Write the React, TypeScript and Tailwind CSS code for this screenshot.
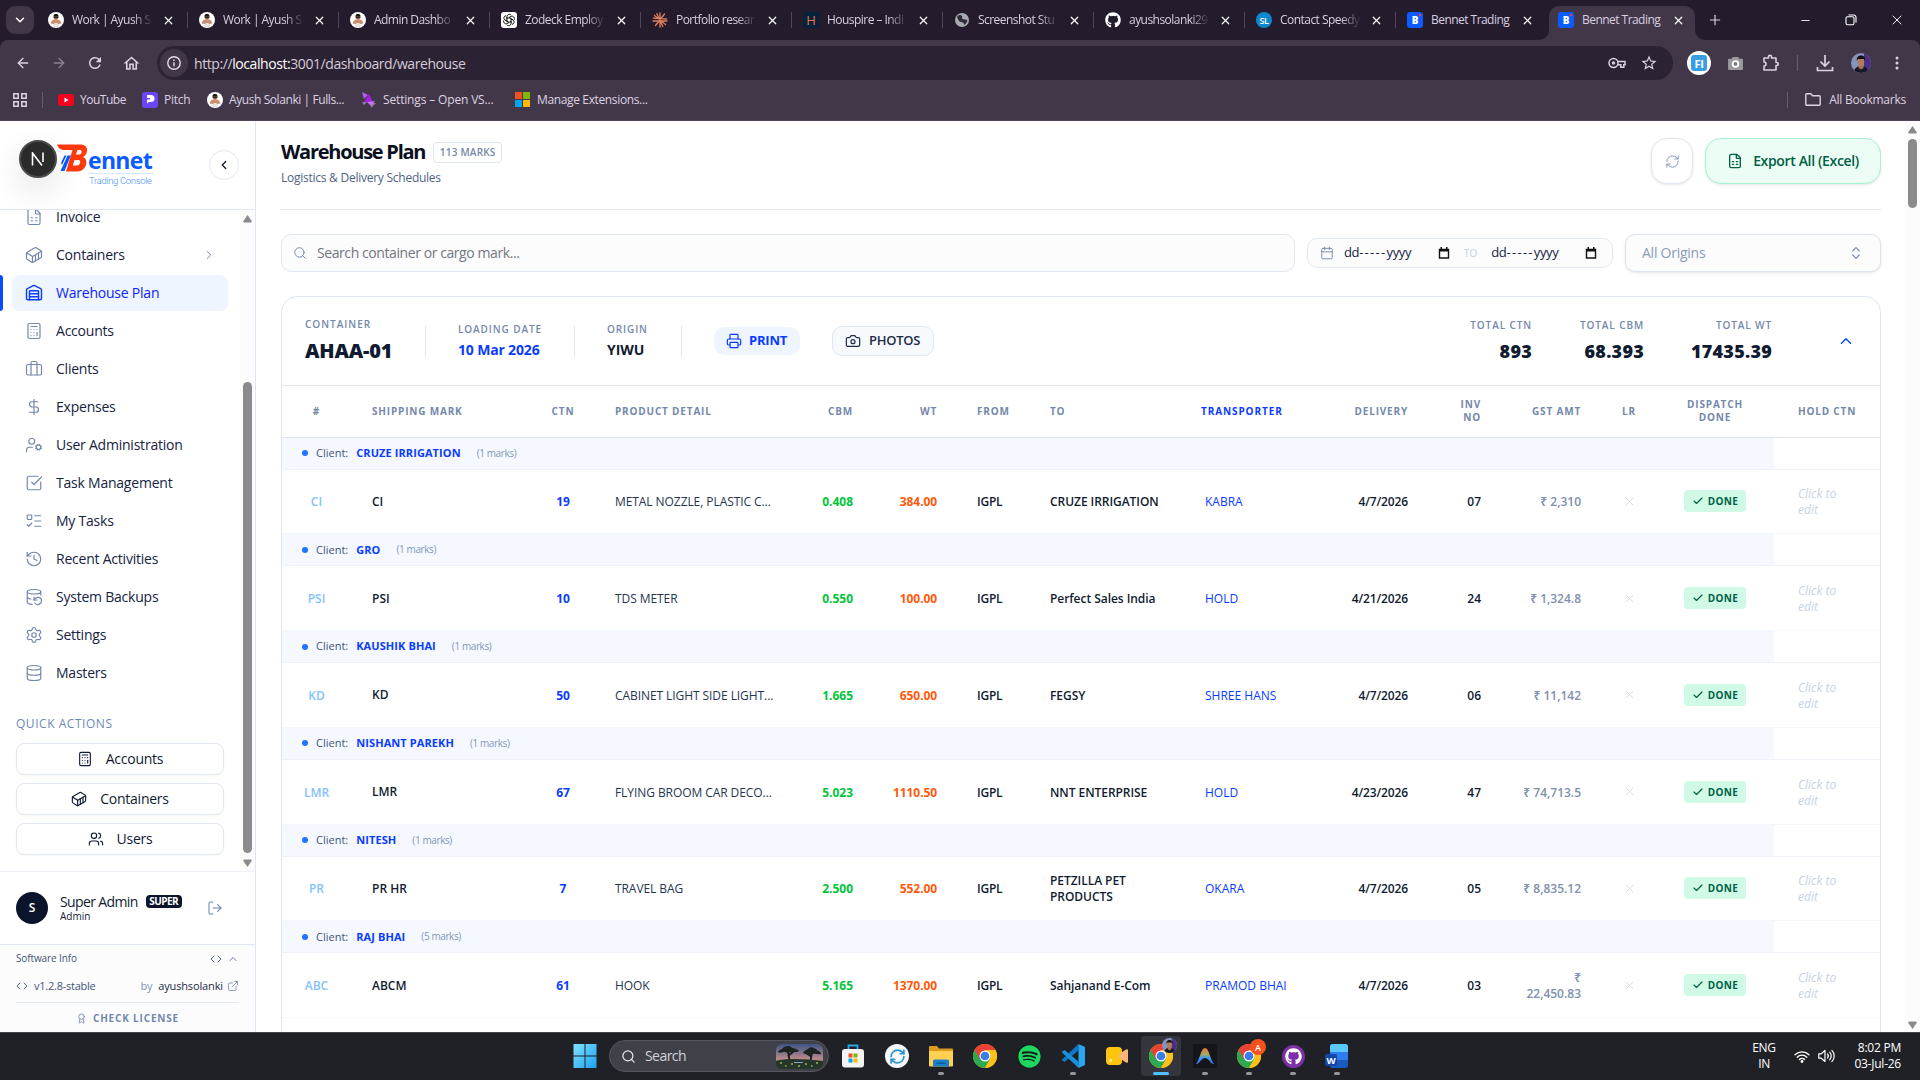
import type { ReactNode } from "react";
import {
  ArrowLeft,
  ArrowRight,
  Award,
  Briefcase,
  Calculator,
  Calendar,
  Camera,
  Check,
  ChevronDown,
  ChevronLeft,
  ChevronRight,
  ChevronsUpDown,
  ChevronUp,
  Code,
  Container,
  Database,
  DatabaseBackup,
  DollarSign,
  ExternalLink,
  FileSpreadsheet,
  History,
  ListTodo,
  LogOut,
  Minus,
  Plus,
  Printer,
  RefreshCw,
  Search,
  Settings,
  SquareCheckBig,
  UserCog,
  Users,
  Warehouse,
  X,
} from "lucide-react";
import { FaGithub, FaSpotify } from "react-icons/fa";
import { MdOutlineHome, MdOutlineStarBorder, MdRefresh } from "react-icons/md";

/* ---------- small artwork ---------- */

function Person({ size = 16 }: { size?: number }) {
  return (
    <svg width={size} height={size} viewBox="0 0 16 16" className="shrink-0">
      <circle cx="8" cy="8" r="8" fill="#fff" />
      <path d="M2.6 11.5C3 8.6 5 7.2 8 7.2s5 1.4 5.4 4.3l-3 .4-2.4-.9-2.4.9z" fill="#c98f6f" />
      <path d="M4.5 12.5l3.5-1.6 3.5 1.6L10 15H6z" fill="#e9e2df" />
      <circle cx="8" cy="5" r="2.4" fill="#8d5f4a" />
      <path d="M5.4 4.4C5.6 2.6 6.6 2 8 2s2.4.6 2.6 2.4z" fill="#1c1413" />
      <path d="M5.6 5h4.8v.9H5.6z" fill="#222" />
    </svg>
  );
}

function Avatar({ size = 20 }: { size?: number }) {
  return (
    <svg width={size} height={size} viewBox="0 0 20 20" className="shrink-0">
      <defs>
        <clipPath id="avatar-clip">
          <circle cx="10" cy="10" r="10" />
        </clipPath>
      </defs>
      <g clipPath="url(#avatar-clip)">
        <path d="M0 0h20v20H0z" fill="#8494ba" />
        <path d="M13 0h7v20h-7z" fill="#4a2f86" />
        <path d="M3 20c0-5 3-7 7-7s7 2 7 7z" fill="#171a26" />
        <path d="M7.5 12h5v3l-2.500 1.500L7.500 15z" fill="#a86f4b" />
        <ellipse cx="10" cy="8.800" rx="3.200" ry="4.400" fill="#b57b56" />
        <path d="M5.800 8C5.400 4 7.500 2.500 10 2.500S14.600 4 14.200 8l-1-2H7z" fill="#14100f" />
      </g>
    </svg>
  );
}

function ChromeLogo() {
  return (
    <svg width="24" height="24" viewBox="0 0 24 24">
      <circle cx="12" cy="12" r="12" fill="#fbc116" />
      <path d="M12 12L1.600 6A12 12 0 0 0 12 24l5.200-9z" fill="#2da94f" />
      <path d="M12 12L1.600 6A12 12 0 0 1 22.400 6H12z" fill="#e94235" />
      <path d="M1.600 6l5.200 9L12 6z" fill="#e94235" />
      <path d="M22.400 6H12l5.200 9L12 24A12 12 0 0 0 22.400 6z" fill="#fbc116" />
      <circle cx="12" cy="12" r="5.500" fill="#fff" />
      <circle cx="12" cy="12" r="4.300" fill="#3b7ded" />
    </svg>
  );
}

function BennetFavicon() {
  return (
    <span className="relative flex size-4 items-center justify-center rounded-[3px] bg-[#0a5cff] text-[10px] font-extrabold leading-none text-white">
      B
      <span className="absolute right-[2px] top-[2px] size-[2px] bg-[#ff3b2f]" />
    </span>
  );
}

function Globe() {
  return (
    <svg width="16" height="16" viewBox="0 0 16 16">
      <circle cx="8" cy="8" r="7" fill="#a7abb0" />
      <path d="M3 5c2-3 4-2 5-1s-1 2 1 3 3 0 4 1-1 4-3 5c0-2-1-3-3-3S4 7 3 5z" fill="#33293d" />
    </svg>
  );
}

function ClaudeBurst() {
  return (
    <svg width="16" height="16" viewBox="0 0 16 16" stroke="#e0805a" strokeWidth="1.300" strokeLinecap="round">
      <path d="M8 .8v14.400M1 9h14M2.500 3.500l11 9M12.500 2L3.500 13.500M4.800 1.500L10.800 14.500M1.500 6.200l13 .8" />
    </svg>
  );
}

function OpenAiMark() {
  return (
    <span className="flex size-4 items-center justify-center rounded-[3px] bg-white">
      <svg width="14" height="14" viewBox="0 0 24 24" fill="none" stroke="#111" strokeWidth="1.500">
        {[0, 60, 120, 180, 240, 300].map((deg) => (
          <path key={deg} d="M8.500 10V5.500A4.300 4.300 0 0 1 16 3.800M8.500 10l6.500-3.800" transform={`rotate(${deg} 12 12)`} />
        ))}
      </svg>
    </span>
  );
}

/* ---------- browser ---------- */

const TABS: { title: string; icon: ReactNode }[] = [
  { title: "Work | Ayush S", icon: <Person /> },
  { title: "Work | Ayush S", icon: <Person /> },
  { title: "Admin Dashbo", icon: <Person /> },
  { title: "Zodeck Employ", icon: <OpenAiMark /> },
  { title: "Portfolio resear", icon: <ClaudeBurst /> },
  {
    title: "Houspire – Indi",
    icon: (
      <span className="flex size-4 items-center justify-center bg-[#06233b] text-[13px] leading-none text-[#e8714c]">H</span>
    ),
  },
  { title: "Screenshot Stu", icon: <Globe /> },
  { title: "ayushsolanki29", icon: <FaGithub size={16} className="text-white" /> },
  {
    title: "Contact Speedy",
    icon: (
      <span className="flex size-4 items-center justify-center rounded-full bg-[#0c87d0] text-[9px] font-semibold leading-none tracking-tighter text-white">
        SL
      </span>
    ),
  },
  { title: "Bennet Trading", icon: <BennetFavicon /> },
  { title: "Bennet Trading", icon: <BennetFavicon /> },
];

function TabStrip() {
  return (
    <div className="flex h-10 bg-[#241b2d] text-[#d8cfe0]">
      <div className="ml-[6px] mr-[3px] mt-[6px] flex size-7 items-center justify-center rounded-[9px] bg-[#423749]">
        <ChevronDown size={14} strokeWidth={2.5} className="text-white" />
      </div>
      {TABS.map((tab, i) => {
        const active = i === TABS.length - 1;
        const faded = i < TABS.length - 2;
        return (
          <div key={i} className="relative flex w-[151px] items-center pl-[11px]">
            {active && (
              <>
                <div className="absolute bottom-0 left-[2px] right-[3px] top-[6px] rounded-t-[10px] bg-[#423749]" />
                <svg className="absolute bottom-0 left-[-8px]" width="10" height="10" viewBox="0 0 10 10">
                  <path d="M10 0v10H0A10 10 0 0 0 10 0z" fill="#423749" />
                </svg>
                <svg className="absolute bottom-0 right-[-7px]" width="10" height="10" viewBox="0 0 10 10">
                  <path d="M0 0v10h10A10 10 0 0 1 0 0z" fill="#423749" />
                </svg>
              </>
            )}
            <span className="relative mr-2 flex size-4">{tab.icon}</span>
            <span
              className={
                faded
                  ? "relative w-[81px] whitespace-nowrap text-[12px] tracking-[-0.045em] [mask-image:linear-gradient(to_right,black_75%,transparent)]"
                  : "relative w-[81px] whitespace-nowrap text-[12px] tracking-[-0.045em]"
              }
            >
              {tab.title}
            </span>
            <X size={13} strokeWidth={2.200} className="relative ml-[9px] text-white" />
            {faded && <span className="absolute right-0 top-3 h-4 w-px bg-[#50455a]" />}
          </div>
        );
      })}
      <div className="flex items-center pl-[9px]">
        <Plus size={16} strokeWidth={1.800} />
      </div>
      <div className="ml-auto flex items-center text-white">
        <span className="flex w-[46px] justify-center"><Minus size={13} strokeWidth={1.600} /></span>
        <span className="flex w-[46px] justify-center">
          <svg width="12" height="12" viewBox="0 0 12 12" fill="none" stroke="currentColor" strokeWidth="1.100">
            <rect x="1" y="2.800" width="8" height="8" rx="1.500" />
            <path d="M3.500 1h5A2.500 2.500 0 0 1 11 3.500v5" />
          </svg>
        </span>
        <span className="flex w-[46px] justify-center"><X size={16} strokeWidth={1.400} /></span>
      </div>
    </div>
  );
}

function Toolbar() {
  return (
    <div className="flex h-[46px] items-center rounded-t-lg bg-[#423749] text-[#ddd0e2]">
      <span className="ml-[5px] flex w-9 justify-center"><ArrowLeft size={16} /></span>
      <span className="flex w-9 justify-center text-[#8b8192]"><ArrowRight size={16} /></span>
      <span className="flex w-9 justify-center"><MdRefresh size={18} /></span>
      <span className="flex w-9 justify-center"><MdOutlineHome size={19} /></span>
      <div className="ml-[8px] flex h-[34px] w-[1516px] items-center rounded-full bg-[#2b2233] pl-[3px]">
        <span className="flex size-7 items-center justify-center rounded-full bg-[#423749]">
          <svg width="14" height="14" viewBox="0 0 14 14" fill="none" stroke="#e6dcea" strokeWidth="1.400">
            <circle cx="7" cy="7" r="6.200" />
            <path d="M7 6.200v4M7 3.500v1.400" />
          </svg>
        </span>
        <span className="ml-[6px] text-[14px] tracking-[-0.03em] text-[#d5cbd9]">
          http://<span className="text-white">localhost:</span>3001/dashboard/warehouse
        </span>
        <svg width="18" height="12" viewBox="0 0 18 12" fill="none" stroke="#ddd0e2" strokeWidth="1.500" className="ml-auto">
          <circle cx="5.500" cy="6" r="4.500" />
          <circle cx="5.500" cy="6" r="1" />
          <path d="M10 4.500h7v3.200h-1.200v2.500h-3V7.700H10" />
        </svg>
        <MdOutlineStarBorder size={18} className="ml-[14px] mr-[15px]" />
      </div>
      <span className="ml-[14px] flex size-6 items-center justify-center rounded-full bg-white">
        <span className="flex size-4 items-center justify-center rounded-[3px] bg-[#3a9ee5] text-[11px] font-bold leading-none tracking-[-0.02em] text-white">FI</span>
      </span>
      <svg width="15" height="13" viewBox="0 0 16 14" className="ml-[17px]">
        <path d="M5 0h6l1 2h3a1 1 0 0 1 1 1v10a1 1 0 0 1-1 1H1a1 1 0 0 1-1-1V3a1 1 0 0 1 1-1h3z" fill="#9d9a9f" />
        <circle cx="8" cy="7.500" r="4" fill="#fff" />
        <circle cx="8" cy="7.500" r="2" fill="#777" />
      </svg>
      <svg width="18" height="18" viewBox="0 0 18 18" fill="none" stroke="#ddd0e2" strokeWidth="1.600" className="ml-[19px]">
        <path d="M2 4h4.500V2.800a1.500 1.500 0 0 1 3 0V4H14v4.500h.8a1.500 1.500 0 0 1 0 3H14V16H2v-4a2 2 0 0 0 0-4z" strokeLinejoin="round" />
      </svg>
      <span className="ml-[17px] h-4 w-px bg-[#6a5f72]" />
      <svg width="18" height="17" viewBox="0 0 18 17" fill="none" stroke="#ddd0e2" strokeWidth="1.700" className="ml-[18px]">
        <path d="M9 0v10.500M4.500 6.500L9 11l4.500-4.500M1.500 12v3.500h15V12" />
      </svg>
      <span className="ml-[17px]"><Avatar size={20} /></span>
      <svg width="4" height="14" viewBox="0 0 4 14" fill="#ddd0e2" className="ml-[24px]">
        <circle cx="2" cy="2" r="1.500" />
        <circle cx="2" cy="7" r="1.500" />
        <circle cx="2" cy="12" r="1.500" />
      </svg>
    </div>
  );
}

function Bookmarks() {
  return (
    <div className="flex h-[35px] items-center border-b border-[#4f4458] bg-[#423749] pb-[7px] text-[12px] text-[#ddd3e2]">
      <svg width="14" height="14" viewBox="0 0 14 14" fill="none" stroke="currentColor" strokeWidth="1.500" className="ml-[13px]">
        <path d="M.8.8h4.400v4.400H.8zM8.800.8h4.400v4.400H8.800zM.8 8.800h4.400v4.400H.8zM8.800 8.800h4.400v4.400H8.800z" />
      </svg>
      <span className="ml-[15px] h-4 w-px bg-[#6a5f72]" />
      <div className="ml-[15px] flex w-[84px] items-center gap-1.5">
        <svg width="16" height="12" viewBox="0 0 16 12">
          <rect width="16" height="12" rx="3" fill="#f8001d" />
          <path d="M6.500 3.500v5l4-2.500z" fill="#fff" />
        </svg>
        <span className="tracking-[-0.04em]">YouTube</span>
      </div>
      <div className="flex w-[65px] items-center gap-1.5">
        <svg width="16" height="16" viewBox="0 0 16 16">
          <rect width="16" height="16" rx="3" fill="#6b46f6" />
          <path d="M5 3h4a3.500 3.500 0 0 1 0 7H7.500A2.500 2.500 0 0 0 5 12.500z" fill="#fff" />
          <path d="M5 6h3v1.500H5z" fill="#6b46f6" />
        </svg>
        <span className="tracking-[-0.02em]">Pitch</span>
      </div>
      <div className="flex w-[154px] items-center gap-1.5">
        <Person />
        <span className="tracking-[-0.035em]">Ayush Solanki | Fulls...</span>
      </div>
      <div className="flex w-[154px] items-center gap-1.5">
        <svg width="16" height="16" viewBox="0 0 16 16">
          <path d="M1 0l6 3-4 4z" fill="#b45cf0" />
          <path d="M8 2l4 8H3z" fill="#a31fe6" />
          <path d="M1 10h5l-3 3zM10 11l5 0-5 5z" fill="#8d7a9c" />
          <path d="M6 10l8-1-4 5z" fill="#c774f4" />
        </svg>
        <span className="tracking-[-0.013em]">Settings – Open VS...</span>
      </div>
      <div className="flex items-center gap-[7px]">
        <svg width="15" height="15" viewBox="0 0 15 15">
          <path d="M0 0h7v7H0z" fill="#f25022" />
          <path d="M8 0h7v7H8z" fill="#7fba00" />
          <path d="M0 8h7v7H0z" fill="#00a4ef" />
          <path d="M8 8h7v7H8z" fill="#ffb900" />
        </svg>
        <span className="tracking-[-0.03em]">Manage Extensions...</span>
      </div>
      <span className="ml-auto h-4 w-px bg-[#6a5f72]" />
      <svg width="16" height="13" viewBox="0 0 16 13" fill="none" stroke="currentColor" strokeWidth="1.400" className="ml-[17px] mr-2">
        <path d="M.8 11.200V1.800a1 1 0 0 1 1-1h4l1.800 2h6.600a1 1 0 0 1 1 1v7.400a1 1 0 0 1-1 1H1.800a1 1 0 0 1-1-1z" />
      </svg>
      <span className="mr-[14px] tracking-[-0.02em]">All Bookmarks</span>
    </div>
  );
}

/* ---------- sidebar ---------- */

const NAV = [
  { label: "Invoice", icon: FileSpreadsheet },
  { label: "Containers", icon: Container, more: true },
  { label: "Warehouse Plan", icon: Warehouse, active: true },
  { label: "Accounts", icon: Calculator },
  { label: "Clients", icon: Briefcase },
  { label: "Expenses", icon: DollarSign },
  { label: "User Administration", icon: UserCog },
  { label: "Task Management", icon: SquareCheckBig },
  { label: "My Tasks", icon: ListTodo },
  { label: "Recent Activities", icon: History },
  { label: "System Backups", icon: DatabaseBackup },
  { label: "Settings", icon: Settings },
  { label: "Masters", icon: Database },
];

const QUICK = [
  { label: "Accounts", icon: Calculator },
  { label: "Containers", icon: Container },
  { label: "Users", icon: Users },
];

function Logo() {
  return (
    <div className="flex pl-[57px] pt-[23px]">
      <svg width="31" height="29" viewBox="0 0 31 29">
        <path d="M10.500 11.500H14L7.500 27H3.500zM5 21l4.500-9.500h-2L4 19z" fill="#0a5cff" />
        <path
          d="M0 .5h23c5 0 7.500 2.500 7 6.500-.3 3-1.800 5-4 6 2.600 1 3.800 3.500 3.200 6.800C28.400 24.500 25 27.500 20 27.500H9L15.500 6H6C3 5.500 1 3.500 0 .5z"
          fill="#ff3a0c"
        />
        <path d="M20.500 6h2.800c2 0 1.800 4.500-1 4.500h-3.400z" fill="#fff" />
        <path d="M17.500 16h4c2.800 0 2 5.500-1.500 5.500h-4.200z" fill="#fff" />
      </svg>
      <div className="w-[66px]">
        <div className="mt-[4px] h-[25px] text-[23px] font-bold leading-[25px] tracking-[-0.03em] text-[#0a5cff]">ennet</div>
        <div className="whitespace-nowrap border-t border-[#d6e4ff] text-[9.500px] font-light leading-[13px] tracking-[-0.035em] text-[#4a90ff] [font-family:Roboto,sans-serif]">
          <span className="pl-px">Trading Console</span>
        </div>
      </div>
    </div>
  );
}

function Sidebar() {
  return (
    <aside className="flex w-64 flex-col border-r border-[#dfe6f2] bg-white">
      <div className="relative h-[89px] shrink-0 border-b border-[#dfe6f2]">
        <Logo />
        {/* dev badge floats over the logo */}
        <div className="absolute left-[19px] top-[19px] flex size-[38px] items-center justify-center rounded-full border-2 border-[#4b4b4b] bg-[#2b2b2b] shadow-[0_12px_32px_rgba(0,0,0,0.12)]">
          <svg width="14" height="14" viewBox="0 0 14 14" fill="none" stroke="#fff" strokeWidth="1.600">
            <path d="M1.500 13.500V1l9.500 12.500M12 .5v9.500" />
          </svg>
        </div>
        <div className="absolute left-[209px] top-[29px] flex size-[30px] items-center justify-center rounded-full border border-[#e2e8f0] bg-white">
          <ChevronLeft size={14} strokeWidth={2.200} className="text-slate-900" />
        </div>
      </div>

      <div className="flex h-[661px] shrink-0 overflow-hidden">
        <div className="-mt-[11px] flex w-[240px] flex-col">
          <nav className="flex flex-col gap-0.5">
            {NAV.map(({ label, icon: Icon, active, more }) => (
              <div key={label} className="relative flex h-9 shrink-0 pl-3">
                {active && <span className="absolute left-0 top-0 h-9 w-[3px] rounded-r-sm bg-[#0a4dff]" />}
                <div
                  className={
                    active
                      ? "flex h-9 w-[216px] items-center rounded-lg bg-[#eef5ff] pl-[13px] text-[#0a22ff]"
                      : "flex h-9 w-[216px] items-center pl-[13px] text-[#16233f]"
                  }
                >
                  <Icon size={18} strokeWidth={active ? 1.900 : 1.600} className={active ? "text-[#0a3cff]" : "text-[#7488ab]"} />
                  <span className="ml-[13px] pb-[2px] text-[14px] font-medium tracking-[-0.016em]">{label}</span>
                  {more && <ChevronRight size={14} strokeWidth={1.700} className="ml-auto mr-[12px] text-[#7488ab]" />}
                </div>
              </div>
            ))}
          </nav>
          <div className="mt-[25px] pl-4 text-[12px] leading-4 tracking-[0.045em] text-[#6f88b3]">QUICK ACTIONS</div>
          <div className="mt-[11px] flex flex-col gap-2 px-4">
            {QUICK.map(({ label, icon: Icon }) => (
              <div
                key={label}
                className="flex h-8 items-center justify-center gap-[13px] rounded-lg border border-[#e2e8f0] bg-white text-[14px] font-medium tracking-[-0.018em] text-[#0f1a33] shadow-[0_1px_2px_rgba(0,0,0,0.04)]"
              >
                <Icon size={16} strokeWidth={1.700} />
                <span className="pb-px">{label}</span>
              </div>
            ))}
          </div>
        </div>
        <div className="flex w-[15px] flex-col items-center bg-[#fcfcfc]">
          <svg width="9" height="8" viewBox="0 0 9 8" className="mt-[5px]">
            <path d="M4.500 0L9 6.500 8 7.500H1L0 6.500z" fill="#8a8a8a" />
          </svg>
          <div className="mt-[159px] h-[471px] w-[9px] rounded-full bg-[#8b8b8b]" />
          <svg width="9" height="8" viewBox="0 0 9 8" className="mt-[6px]">
            <path d="M4.500 8L9 1.500 8 .5H1L0 1.500z" fill="#8a8a8a" />
          </svg>
        </div>
      </div>

      <div className="flex h-[74px] shrink-0 items-center border-b border-t border-b-[#dfe6f2] border-t-[#edf1f7] pl-4">
        <div className="flex size-8 items-center justify-center rounded-full bg-[#0c142b] text-[12px] font-semibold text-white">S</div>
        <div className="mb-[2px] ml-3">
          <div className="flex items-center gap-2">
            <span className="text-[14px] leading-[17px] tracking-[-0.045em] text-[#0f1a33]">Super Admin</span>
            <span className="flex h-[13px] w-[36px] items-center justify-center rounded bg-[#0c142b] text-[10px] font-bold tracking-[-0.06em] text-white">
              SUPER
            </span>
          </div>
          <div className="text-[10px] font-medium leading-[12px] text-[#0f1a33]">Admin</div>
        </div>
        <LogOut size={16} strokeWidth={1.600} className="ml-auto mr-[32px] text-[#7488ab]" />
      </div>

      <div className="h-[87px] bg-[#fcfcfd] pl-4 pr-4 text-[#3f5478]">
        <div className="flex h-[27px] items-center text-[10px] tracking-[-0.012em]">
          Software Info
          <Code size={12} strokeWidth={1.800} className="ml-auto" />
          <ChevronUp size={12} strokeWidth={1.600} className="ml-[5px]" />
        </div>
        <div className="flex h-[30px] items-center pb-[2px] text-[11px] tracking-[-0.022em]">
          <Code size={12} strokeWidth={1.800} />
          <span className="ml-1.5">v1.2.8-stable</span>
          <span className="ml-auto text-[#8296b5]">by</span>
          <span className="ml-[6px] font-medium tracking-[-0.012em] text-[#1d2b47]">ayushsolanki</span>
          <ExternalLink size={12} strokeWidth={1.600} className="ml-1 text-[#7488ab]" />
        </div>
        <div className="flex h-[32px] items-center justify-center gap-1.5 border-t border-[#e2e8f0] text-[10px] font-bold tracking-[0.082em] text-[#7488ab]">
          <Award size={11} strokeWidth={1.800} />
          CHECK LICENSE
        </div>
      </div>
    </aside>
  );
}

/* ---------- warehouse plan ---------- */

const COLS =
  "grid grid-cols-[69px_189px_46px_200px_67px_84px_97px_151px_123px_100px_73px_100px_96px_76px_127px] items-center";

const ROWS = [
  { client: "CRUZE IRRIGATION", marks: 1, code: "CI", mark: "CI", ctn: "19", product: "METAL NOZZLE, PLASTIC C...", cbm: "0.408", wt: "384.00", to: "CRUZE IRRIGATION", by: "KABRA", date: "4/7/2026", inv: "07", gst: "₹ 2,310" },
  { client: "GRO", marks: 1, code: "PSI", mark: "PSI", ctn: "10", product: "TDS METER", cbm: "0.550", wt: "100.00", to: "Perfect Sales India", by: "HOLD", date: "4/21/2026", inv: "24", gst: "₹ 1,324.8" },
  { client: "KAUSHIK BHAI", marks: 1, code: "KD", mark: "KD", ctn: "50", product: "CABINET LIGHT SIDE LIGHT...", cbm: "1.665", wt: "650.00", to: "FEGSY", by: "SHREE HANS", date: "4/7/2026", inv: "06", gst: "₹ 11,142" },
  { client: "NISHANT PAREKH", marks: 1, code: "LMR", mark: "LMR", ctn: "67", product: "FLYING BROOM CAR DECO...", cbm: "5.023", wt: "1110.50", to: "NNT ENTERPRISE", by: "HOLD", date: "4/23/2026", inv: "47", gst: "₹ 74,713.5" },
  { client: "NITESH", marks: 1, code: "PR", mark: "PR HR", ctn: "7", product: "TRAVEL BAG", cbm: "2.500", wt: "552.00", to: "PETZILLA PET\nPRODUCTS", by: "OKARA", date: "4/7/2026", inv: "05", gst: "₹ 8,835.12" },
  { client: "RAJ BHAI", marks: 5, code: "ABC", mark: "ABCM", ctn: "61", product: "HOOK", cbm: "5.165", wt: "1370.00", to: "Sahjanand E-Com", by: "PRAMOD BHAI", date: "4/7/2026", inv: "03", gst: "₹\n22,450.83" },
];

function PageHeader() {
  return (
    <div className="flex h-[89px] items-start border-b border-[#e2e5ea]">
      <div className="pt-[17px]">
        <div className="flex h-7 items-center gap-2">
          <h1 className="text-[20px] font-bold leading-7 tracking-[-0.063em] text-[#0a1020]">Warehouse Plan</h1>
          <span className="flex h-[21px] w-[69px] items-center justify-center rounded border border-[#dfe5ee] text-[10px] font-semibold tracking-[0.02em] text-[#7488ab]">
            113 MARKS
          </span>
        </div>
        <p className="mt-[3px] text-[12px] leading-[18px] tracking-[-0.021em] text-[#4e6285]">Logistics &amp; Delivery Schedules</p>
      </div>
      <div className="ml-auto mt-[17px] flex gap-3">
        <div className="flex h-[46px] w-[42px] items-center justify-center rounded-2xl border border-[#e2e8f0] bg-white shadow-[0_1px_3px_rgba(0,0,0,0.1)]">
          <RefreshCw size={15} strokeWidth={1.600} className="text-[#8296b5]" />
        </div>
        <div className="flex h-[46px] w-[176px] items-center justify-center gap-[10px] rounded-2xl border border-[#a4f4cf] bg-[#ecfdf5] text-[14px] font-semibold tracking-[-0.025em] text-[#006045] shadow-[0_1px_3px_rgba(0,0,0,0.1)]">
          <FileSpreadsheet size={16} strokeWidth={2} />
          <span className="pb-px">Export All (Excel)</span>
        </div>
      </div>
    </div>
  );
}

function DateField() {
  return (
    <div className="flex items-center">
      <span className="w-[94px] text-[13px] tracking-[-0.03em] text-[#16233f]">
        dd<span className="tracking-[0.1em]">-----</span>yyyy
      </span>
      <svg width="12" height="12" viewBox="0 0 12 12">
        <path d="M1.500 2.500h9v8.500h-9z" fill="none" stroke="#111" strokeWidth="1.400" />
        <path d="M1 2h10v2.500H1zM2.500 0h1.500v2H2.500zM8 0h1.500v2H8z" fill="#111" />
      </svg>
    </div>
  );
}

function Filters() {
  return (
    <div className="mt-6 flex items-center">
      <div className="flex h-[38px] w-[1014px] items-center rounded-[10px] border border-[#e2e8f0] bg-[#fcfcfd] pl-[11px]">
        <Search size={14} strokeWidth={1.700} className="text-[#7488ab]" />
        <span className="ml-[10px] pb-px text-[14px] tracking-[-0.03em] text-[#73767f]">Search container or cargo mark...</span>
      </div>
      <div className="ml-3 flex h-[30px] w-[306px] items-center rounded-[10px] border border-[#e2e8f0] bg-[#fcfcfd] pl-[12px]">
        <Calendar size={14} strokeWidth={1.600} className="mr-[10px] text-[#7488ab]" />
        <DateField />
        <span className="mx-[14px] text-[10px] font-medium text-[#c6d0df]">TO</span>
        <DateField />
      </div>
      <div className="ml-3 flex h-[38px] w-[256px] items-center rounded-[10px] border border-[#dde3ee] bg-[#fcfcfd] pl-4 pr-[16px] shadow-[0_1px_3px_rgba(0,0,0,0.1)]">
        <span className="pb-px text-[14px] tracking-[-0.018em] text-[#8a9ab5]">All Origins</span>
        <ChevronsUpDown size={16} strokeWidth={1.600} className="ml-auto text-[#7488ab]" />
      </div>
    </div>
  );
}

function Total({ label, value, width }: { label: string; value: string; width: string }) {
  return (
    <div className={"text-right " + width}>
      <div className="text-[10px] font-semibold leading-[15px] tracking-[0.09em] text-[#7488ab]">{label}</div>
      <div className="mt-[4px] text-[18px] font-extrabold leading-7 tracking-[0.014em] text-[#101b31]">{value}</div>
    </div>
  );
}

function ContainerHeader() {
  return (
    <div className="flex h-[89px] items-center border-b border-[#dfe4ec] pl-[23px]">
      <div className="w-[120px]">
        <div className="text-[10px] font-semibold leading-[15px] tracking-[0.1em] text-[#7488ab]">CONTAINER</div>
        <div className="mt-[5px] text-[20px] font-extrabold leading-7 tracking-[-0.01em] text-[#101b31]">AHAA-01</div>
      </div>
      <span className="h-8 w-px bg-[#e2e8f0]" />
      <div className="w-[148px] pl-8">
        <div className="text-[10px] font-semibold leading-[15px] tracking-[0.09em] text-[#7488ab]">LOADING DATE</div>
        <div className="mt-[3px] text-[14px] font-bold leading-5 tracking-[-0.012em] text-[#0a3cff]">10 Mar 2026</div>
      </div>
      <span className="h-8 w-px bg-[#e2e8f0]" />
      <div className="w-[106px] pl-8">
        <div className="text-[10px] font-semibold leading-[15px] tracking-[0.09em] text-[#7488ab]">ORIGIN</div>
        <div className="mt-[3px] text-[14px] font-bold leading-5 tracking-[-0.005em] text-[#101b31]">YIWU</div>
      </div>
      <span className="h-8 w-px bg-[#e2e8f0]" />
      <div className="ml-8 flex h-7 w-[86px] items-center rounded-[10px] bg-[#eef5ff] pl-3 text-[13px] font-bold text-[#0a3cff]">
        <Printer size={16} strokeWidth={1.800} className="mr-[7px]" />
        <span className="tracking-[-0.015em]">PRINT</span>
      </div>
      <div className="ml-8 flex h-[30px] w-[102px] items-center rounded-[10px] border border-[#dfe6f0] bg-[#f7fafc] pl-3 text-[13px] font-semibold text-[#1d2b47]">
        <Camera size={16} strokeWidth={1.800} className="mr-[8px]" />
        <span className="tracking-[-0.02em]">PHOTOS</span>
      </div>
      <div className="ml-auto flex">
        <Total label="TOTAL CTN" value="893" width="w-[100px]" />
        <Total label="TOTAL CBM" value="68.393" width="w-[112px]" />
        <Total label="TOTAL WT" value="17435.39" width="w-[128px]" />
      </div>
      <ChevronUp size={18} strokeWidth={2} className="ml-[65px] mr-[25px] text-[#0a4dff]" />
    </div>
  );
}

function TableHeader() {
  return (
    <div className={COLS + " h-[51.500px] border-b border-[#dfe4ec] text-[10px] font-bold leading-[13px] tracking-[0.082em] text-[#7488ab]"}>
      <div className="text-center">#</div>
      <div className="pl-[21px]">SHIPPING MARK</div>
      <div className="text-center">CTN</div>
      <div className="pl-[29px]">PRODUCT DETAIL</div>
      <div className="text-right">CBM</div>
      <div className="text-right">WT</div>
      <div className="pl-10">FROM</div>
      <div className="pl-4">TO</div>
      <div className="pl-4 tracking-[0.09em] text-[#0a3cff]">TRANSPORTER</div>
      <div className="text-right">DELIVERY</div>
      <div className="text-right">
        INV
        <br />
        NO
      </div>
      <div className="text-right">GST AMT</div>
      <div className="text-center">LR</div>
      <div className="text-center">
        DISPATCH
        <br />
        DONE
      </div>
      <div className="pl-[45px]">HOLD CTN</div>
    </div>
  );
}

function MarkRow({ row }: { row: (typeof ROWS)[number] }) {
  return (
    <div>
      <div className="flex h-8 items-stretch border-b border-[#edf2f8]">
        <div className="flex w-[1492px] items-center bg-[#f5f9ff] pl-5">
          <span className="size-1.5 rounded-full bg-[#1d74ff]" />
          <span className="ml-[8px] text-[11px] font-medium text-[#3f5478]">Client:</span>
          <span className="ml-2 text-[11px] font-bold tracking-[0.008em] text-[#0a3cff]">{row.client}</span>
          <span className="ml-4 text-[10px] tracking-[-0.04em] text-[#8296b5]">({row.marks} marks)</span>
        </div>
      </div>
      <div className={COLS + " h-[64.750px] border-b border-[#f3f6fa] pt-[2px] text-[12px] font-semibold leading-4 text-[#101b31]"}>
        <div className="text-center text-[#84c2ff]">{row.code}</div>
        <div className="pb-px pl-[21px]">{row.mark}</div>
        <div className="text-center font-bold text-[#0a3cff]">{row.ctn}</div>
        <div className="whitespace-nowrap pl-[29px] font-normal tracking-[-0.006em] text-[#26354f]">{row.product}</div>
        <div className="text-right font-bold text-[#00c638]">{row.cbm}</div>
        <div className="text-right font-bold tracking-[-0.008em] text-[#ff5a0a]">{row.wt}</div>
        <div className="pl-10 tracking-[-0.02em]">IGPL</div>
        <div className="whitespace-pre-line pl-4 tracking-[-0.004em]">{row.to}</div>
        <div className="pl-5 font-medium text-[#0a3cff]">{row.by}</div>
        <div className="text-right tracking-[-0.01em]">{row.date}</div>
        <div className="text-right">{row.inv}</div>
        <div className="whitespace-pre-line text-right text-[#7e90ad]">{row.gst}</div>
        <div className="flex justify-center">
          <X size={13} strokeWidth={1.500} className="mb-[2px] text-[#ced8e6]" />
        </div>
        <div className="flex justify-center">
          <span className="mb-[2px] flex h-[22px] w-[62px] items-center justify-center gap-1 rounded bg-[#d0fae5] text-[10px] font-bold tracking-[0.03em] text-[#006045]">
            <Check size={12} strokeWidth={2.300} />
            DONE
          </span>
        </div>
        <div className="pl-[45px] font-normal italic text-[#c6d2e2]">
          Click to
          <br />
          edit
        </div>
      </div>
    </div>
  );
}

function WarehousePlan() {
  return (
    <main className="flex flex-1 overflow-hidden bg-white">
      <div className="ml-[25px] w-[1600px]">
        <PageHeader />
        <Filters />
        <section className="mt-6 h-[760px] overflow-hidden rounded-t-2xl border border-[#dfe6f0] bg-white">
          <ContainerHeader />
          <TableHeader />
          {ROWS.map((row) => (
            <MarkRow key={row.code} row={row} />
          ))}
        </section>
      </div>
      <div className="ml-auto flex w-[15px] flex-col items-center bg-[#fcfcfc]">
        <svg width="9" height="8" viewBox="0 0 9 8" className="mt-[5px]">
          <path d="M4.500 0L9 6.500 8 7.500H1L0 6.500z" fill="#8a8a8a" />
        </svg>
        <div className="mt-[5px] h-[69px] w-[9px] rounded-full bg-[#8b8b8b]" />
        <svg width="9" height="8" viewBox="0 0 9 8" className="mb-[3px] mt-auto">
          <path d="M4.500 8L9 1.500 8 .5H1L0 1.500z" fill="#8a8a8a" />
        </svg>
      </div>
    </main>
  );
}

/* ---------- taskbar ---------- */

const APPS: { name: string; icon: ReactNode; state?: "open" | "active" }[] = [
  {
    name: "store",
    icon: (
      <svg width="24" height="24" viewBox="0 0 24 24">
        <path d="M7.500 6V1.500h9V6" fill="none" stroke="#29a8e8" strokeWidth="1.800" />
        <rect x="1" y="5" width="22" height="18.500" rx="3" fill="#f3f3f5" />
        <path d="M7.500 9.500h4v4h-4z" fill="#f25022" />
        <path d="M12.500 9.500h4v4h-4z" fill="#7fba00" />
        <path d="M7.500 14.500h4v4h-4z" fill="#00a4ef" />
        <path d="M12.500 14.500h4v4h-4z" fill="#ffb900" />
      </svg>
    ),
  },
  {
    name: "sync",
    icon: (
      <span className="flex size-6 items-center justify-center rounded-full bg-[#f4f8fb]">
        <RefreshCw size={17} strokeWidth={2.400} className="text-[#2a93d1]" />
      </span>
    ),
  },
  {
    name: "explorer",
    state: "open",
    icon: (
      <svg width="24" height="24" viewBox="0 0 24 24">
        <path d="M0 3a1 1 0 0 1 1-1h7l2 2.500h13a1 1 0 0 1 1 1V20H0z" fill="#e09a1c" />
        <path d="M0 7h24v14.500a1 1 0 0 1-1 1H1a1 1 0 0 1-1-1z" fill="#ffd152" />
        <path d="M4 22.500V17a1.500 1.500 0 0 1 1.500-1.500h13A1.500 1.500 0 0 1 20 17v5.500z" fill="#1b7fc9" />
        <path d="M7.500 18.500h9v1.500h-9z" fill="#0d5c9b" />
      </svg>
    ),
  },
  { name: "chrome", icon: <ChromeLogo /> },
  {
    name: "spotify",
    icon: (
      <span className="flex size-6 items-center justify-center rounded-full bg-[#15181a]">
        <FaSpotify size={23} className="text-[#1ed760]" />
      </span>
    ),
  },
  {
    name: "vscode",
    state: "open",
    icon: (
      <svg width="24" height="24" viewBox="0 0 24 24">
        <path d="M17.500 0v6.500L3.500 18 .5 16z" fill="#1078c4" />
        <path d="M.5 8l3-2 14 11.500V24z" fill="#1a8fdc" />
        <path d="M17.500 0L24 3v18l-6.500 3z" fill="#2aa5f0" />
      </svg>
    ),
  },
  {
    name: "recorder",
    icon: (
      <svg width="24" height="24" viewBox="0 0 24 24">
        <rect x="1" y="3" width="16" height="18" rx="4" fill="#ffc40d" />
        <path d="M14 10l7-4.500c1-.6 2 0 2 1v11c0 1-1 1.600-2 1L14 14z" fill="#ffb27a" />
        <path d="M4 15h3v3H4z" fill="#ffe48a" />
      </svg>
    ),
  },
  {
    name: "chrome-profile",
    state: "active",
    icon: (
      <>
        <ChromeLogo />
        <span className="absolute left-[13px] top-[-6px]"><Avatar size={15} /></span>
      </>
    ),
  },
  {
    name: "antigravity",
    state: "open",
    icon: (
      <svg width="24" height="24" viewBox="0 0 24 24">
        <defs>
          <linearGradient id="arc" x1="0" y1="0" x2="0" y2="1">
            <stop offset="0" stopColor="#f0763a" />
            <stop offset=".4" stopColor="#a7a85f" />
            <stop offset=".6" stopColor="#3f9bf0" />
            <stop offset="1" stopColor="#2a6ff0" />
          </linearGradient>
        </defs>
        <path d="M0 0h24v24H0z" fill="#15161a" />
        <path d="M3 20C7 15 8 4 12 4s5 11 9 16c-3 1-5-6-9-6s-6 7-9 6z" fill="url(#arc)" />
      </svg>
    ),
  },
  {
    name: "chrome-a",
    state: "open",
    icon: (
      <>
        <ChromeLogo />
        <span className="absolute left-[13px] top-[-5px] flex size-4 items-center justify-center rounded-full bg-[#f4511e] text-[9px] font-semibold leading-none text-white">
          A
        </span>
      </>
    ),
  },
  {
    name: "github",
    state: "open",
    icon: (
      <span className="flex size-[23px] items-center justify-center rounded-full bg-[#7b2fa8]">
        <FaGithub size={17} className="text-white" />
      </span>
    ),
  },
  {
    name: "word",
    state: "open",
    icon: (
      <svg width="24" height="24" viewBox="0 0 24 24">
        <rect x="5" y="0" width="18" height="24" rx="2.500" fill="#185abd" />
        <path d="M5 2.500A2.500 2.500 0 0 1 7.500 0h13A2.500 2.500 0 0 1 23 2.500V8H5z" fill="#5ac8fa" />
        <path d="M5 8h18v8H5z" fill="#2f7cf0" />
        <rect x="0" y="10" width="12" height="12" rx="2" fill="#1247a8" />
        <text x="6" y="19.500" fontSize="9.500" fontWeight="700" textAnchor="middle" fill="#fff">W</text>
      </svg>
    ),
  },
];

function Taskbar() {
  return (
    <div className="flex h-12 shrink-0 items-center border-t border-[#44454b] bg-[#202127] pb-px text-white">
      <svg width="24" height="24" viewBox="0 0 24 24" className="ml-[573px]">
        <defs>
          <linearGradient id="win" x1="0" y1="0" x2="1" y2="1">
            <stop offset="0" stopColor="#7fe3ff" />
            <stop offset="1" stopColor="#1d9ff0" />
          </linearGradient>
        </defs>
        <path d="M.5 0h11v11.500H.5zM12.500 0h11v11.500h-11zM.5 12.500h11V24H.5zM12.500 12.500h11V24h-11z" fill="url(#win)" />
      </svg>
      <div className="ml-[12px] flex h-8 w-[220px] items-center rounded-full border border-[#55565d] bg-[#3f4048] pl-[11px]">
        <Search size={15} strokeWidth={2} className="text-[#e6e6ea]" />
        <span className="ml-[9px] pb-px text-[14px] tracking-[-0.04em] text-[#d2d2d8]">Search</span>
        <svg width="47" height="25" viewBox="0 0 47 25" className="ml-auto mr-[5px]">
          <defs>
            <linearGradient id="sky" x1="0" y1="0" x2="0" y2="1">
              <stop offset="0" stopColor="#3d5486" />
              <stop offset=".6" stopColor="#b98a8a" />
              <stop offset="1" stopColor="#2e3d2e" />
            </linearGradient>
          </defs>
          <rect width="47" height="25" rx="6" fill="url(#sky)" />
          <path d="M12 7l2 13M36 8l-2 12M12 12l6-5M36 13l-6-4" stroke="#171a1c" strokeWidth="1.800" />
          <path d="M2 8c1-3 4-2 5-4s6-3 8-1 6 1 8 4c-3 2-5 0-8 1s-4 1-6 0-4 2-7 0zM27 9c1-3 4-3 6-5s6 0 8 2 4 1 4 4c-3 1-5-1-8 0s-6 1-10-1z" fill="#1b2420" />
          <path d="M0 17c10-3 30-2 47 0v3a5 5 0 0 1-5 5H5a5 5 0 0 1-5-5z" fill="#26362a" />
          <path d="M4 19h2M9 22h1.500M15 20h2M22 22h2M29 20h2M35 22h1.500M40 19h2" stroke="#9fb24a" strokeWidth="1.500" />
          <path d="M18 18.500h9" stroke="#8fa4c4" />
        </svg>
      </div>
      <div className="ml-[2px] flex">
        {APPS.map((app) => (
          <div key={app.name} className="relative flex h-[46px] w-11 items-center justify-center">
            {app.state === "active" && <span className="absolute inset-x-[2px] inset-y-[3px] rounded bg-[#35363d]" />}
            <span className="relative flex">{app.icon}</span>
            {app.state === "open" && <span className="absolute bottom-[4px] h-[3px] w-1.5 rounded-full bg-[#96979c]" />}
            {app.state === "active" && <span className="absolute bottom-[4px] h-[3px] w-4 rounded-full bg-[#4cc2ff]" />}
          </div>
        ))}
      </div>
      <div className="ml-auto flex items-center text-[12px] leading-4 tracking-[-0.03em]">
        <div className="w-[30px] text-center">
          ENG
          <br />
          IN
        </div>
        <svg width="16" height="13" viewBox="0 0 16 13" fill="none" stroke="#fff" strokeWidth="1.300" strokeLinecap="round" className="ml-[15px]">
          <path d="M1 4.800a10 10 0 0 1 14 0M3.200 7.200a6.800 6.800 0 0 1 9.600 0M5.400 9.500a3.700 3.700 0 0 1 5.200 0" />
          <circle cx="8" cy="11.500" r=".8" fill="#fff" />
        </svg>
        <svg width="17" height="14" viewBox="0 0 17 14" fill="none" stroke="#fff" strokeWidth="1.200" strokeLinecap="round" strokeLinejoin="round" className="ml-[8px]">
          <path d="M.8 4.800h2.400L7 1.500v11L3.200 9.200H.8zM9.500 5a3 3 0 0 1 0 4M11.700 3.200a5.500 5.500 0 0 1 0 7.600M13.900 1.400a8 8 0 0 1 0 11.200" />
        </svg>
        <div className="mr-[19px] w-[66px] text-right tracking-[-0.02em]">
          8:02 PM
          <br />
          03-Jul-26
        </div>
      </div>
    </div>
  );
}

export default function App() {
  return (
    <div className="flex h-[1080px] w-[1920px] flex-col overflow-hidden bg-[#241b2d] [font-family:'Segoe_UI','Open_Sans','Noto_Sans',sans-serif]">
      <TabStrip />
      <Toolbar />
      <Bookmarks />
      <div className="flex h-[911px] shrink-0 overflow-hidden bg-white">
        <Sidebar />
        <WarehousePlan />
      </div>
      <Taskbar />
    </div>
  );
}
